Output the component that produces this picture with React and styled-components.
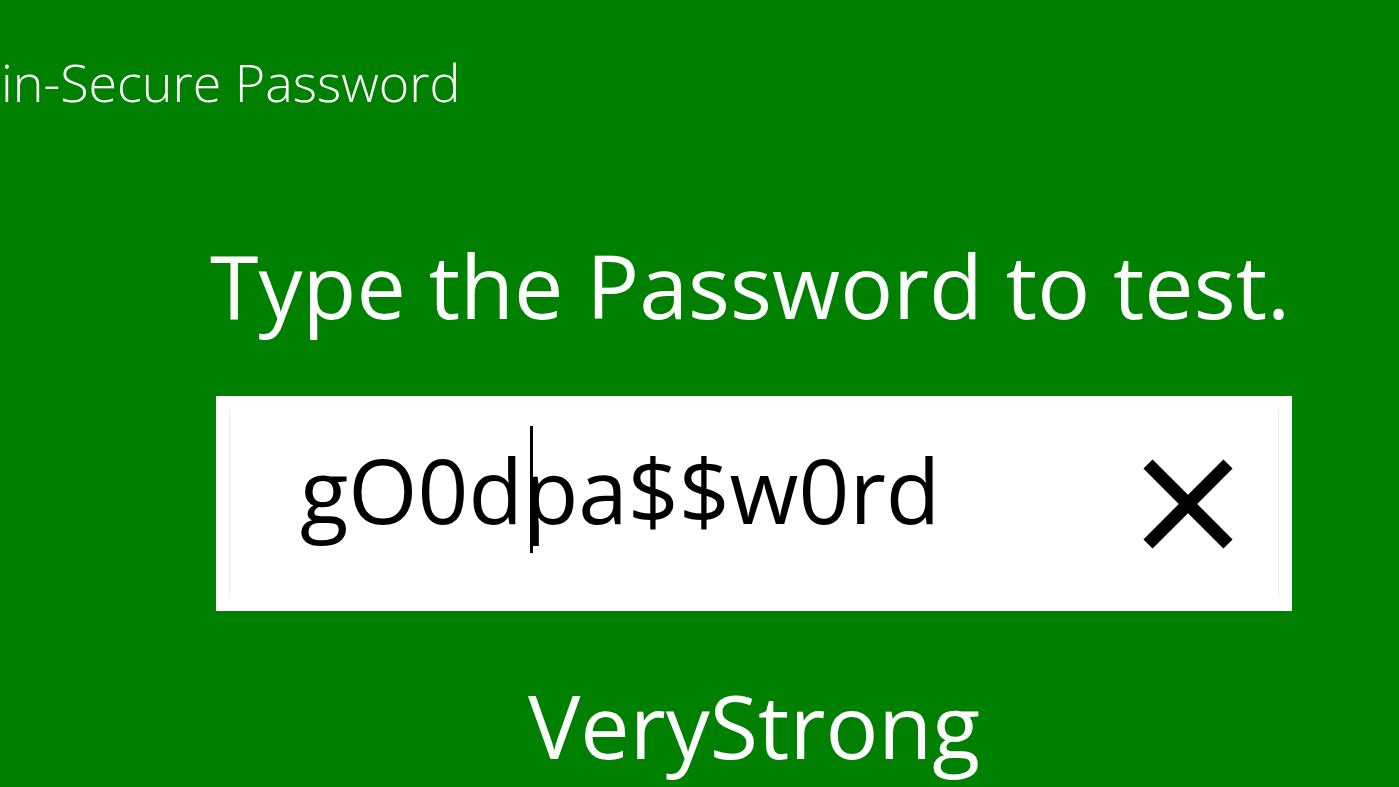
import React from 'react';
import styled, { createGlobalStyle } from 'styled-components';

const GlobalStyle = createGlobalStyle`
  html, body {
    margin: 0;
    padding: 0;
    background: #008000;
    overflow: hidden;
  }
`;

const Page = styled.div`
  width: 1399px;
  height: 787px;
  background: #008000;
  color: #fff;
  font-family: "Open Sans", "Noto Sans", sans-serif;
  display: flex;
  flex-direction: column;
  overflow: hidden;
`;

const AppTitle = styled.h1`
  margin: 0;
  padding: 42px 0 0 1px;
  font-size: 52px;
  font-weight: 300;
  line-height: 80px;
  white-space: nowrap;
`;

const Main = styled.main`
  display: flex;
  flex-direction: column;
  align-items: stretch;
  width: 1076px;
  margin: 0 0 0 216px;
`;

const Prompt = styled.h2`
  margin: 98px 0 0 -6px;
  font-size: 88px;
  font-weight: 400;
  line-height: 130px;
  white-space: nowrap;
`;

const Field = styled.div`
  margin-top: 46px;
  height: 215px;
  background: #fff;
  padding: 14px 13px;
  box-sizing: border-box;
  display: flex;
`;

const FieldInner = styled.div`
  flex: 1;
  border-left: 1px solid #e2efe2;
  border-right: 1px solid #e2efe2;
  display: flex;
  align-items: center;
  justify-content: space-between;
  padding: 0 44px 0 70px;
`;

const Value = styled.div`
  color: #000;
  font-size: 89px;
  line-height: 1;
  white-space: nowrap;
  display: flex;
  align-items: center;
  margin-bottom: 28px;
`;

const Caret = styled.span`
  display: inline-block;
  width: 3px;
  height: 127px;
  background: #000;
  margin: 0 -9px 0 7px;
`;

const ClearButton = styled.button`
  border: none;
  background: none;
  padding: 0;
  width: 92px;
  height: 92px;
  display: flex;
  align-items: center;
  justify-content: center;
  cursor: pointer;
`;

const Result = styled.div`
  margin-top: 59px;
  text-align: center;
  font-size: 88px;
  line-height: 110px;
  white-space: nowrap;
`;

const CloseIcon = () => (
  <svg width="92" height="92" viewBox="0 0 92 92">
    <path d="M6 6 L86 86 M86 6 L6 86" stroke="#000" strokeWidth="13" />
  </svg>
);

const App = () => {
  return (
    <Page>
      <GlobalStyle />
      <AppTitle>in-Secure Password</AppTitle>
      <Main>
        <Prompt>Type the Password to test.</Prompt>
        <Field>
          <FieldInner>
            <Value>
              gO0d<Caret />pa$$w0rd
            </Value>
            <ClearButton aria-label="clear">
              <CloseIcon />
            </ClearButton>
          </FieldInner>
        </Field>
        <Result>VeryStrong</Result>
      </Main>
    </Page>
  );
};

export default App;
